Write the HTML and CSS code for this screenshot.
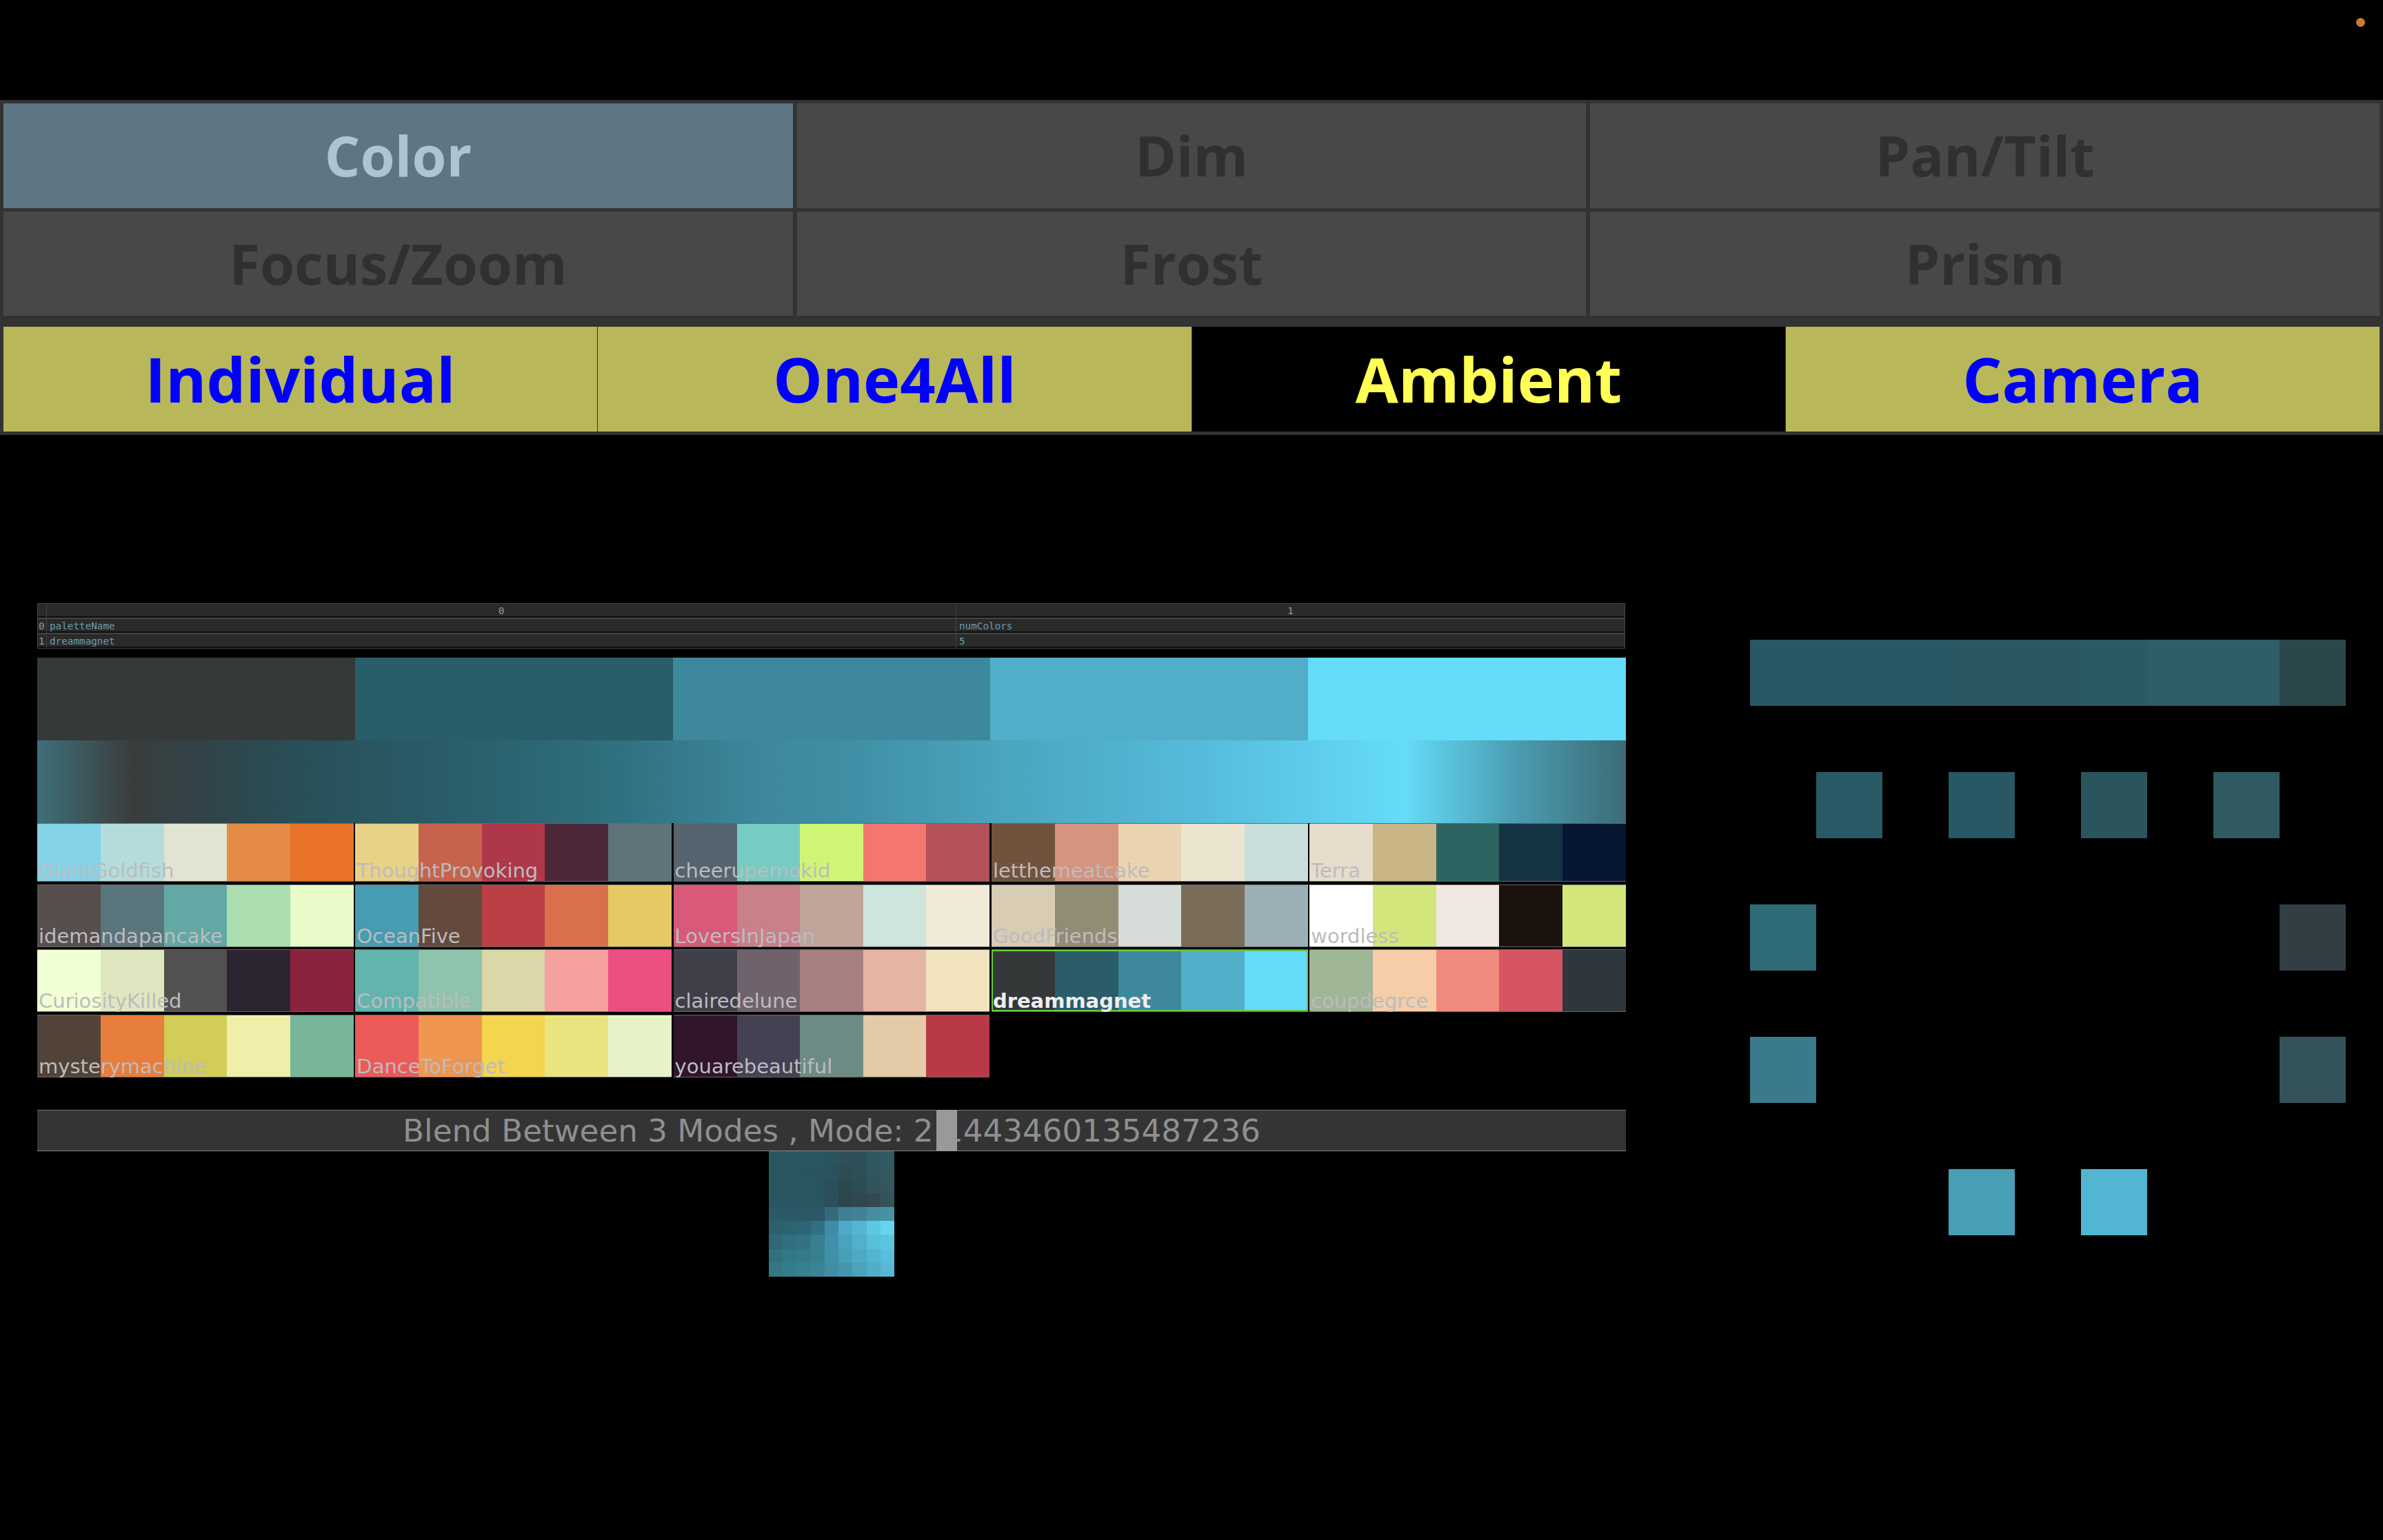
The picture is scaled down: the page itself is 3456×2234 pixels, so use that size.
FILE: index.html
```html
<!DOCTYPE html>
<html lang="en">
<head>
  <meta charset="UTF-8" />
  <title>Ambient Color</title>
  <link rel="stylesheet" href="styles.css">
</head>
<body>
  <span class="status-dot"></span>

  <header class="controls">
    <nav class="groups">
      <button class="group active">Color</button>
      <button class="group">Dim</button>
      <button class="group">Pan/Tilt</button>
      <button class="group">Focus/Zoom</button>
      <button class="group">Frost</button>
      <button class="group">Prism</button>
    </nav>
    <nav class="modes">
      <button class="mode">Individual</button>
      <button class="mode">One4All</button>
      <button class="mode active">Ambient</button>
      <button class="mode">Camera</button>
    </nav>
  </header>

  <main class="content">
    <section class="left">
      <div class="datatable">
        <div class="cell head"></div>
        <div class="cell head">0</div>
        <div class="cell head">1</div>
        <div class="cell index">0</div>
        <div class="cell">paletteName</div>
        <div class="cell">numColors</div>
        <div class="cell index">1</div>
        <div class="cell">dreammagnet</div>
        <div class="cell">5</div>
      </div>

      <div class="current">
        <div class="cur cur1"></div>
        <div class="cur cur2"></div>
        <div class="cur cur3"></div>
        <div class="cur cur4"></div>
        <div class="cur cur5"></div>
      </div>
      <div class="ramp"></div>

      <div class="palettes">
        <div class="tile giantgoldfish"><span>GiantGoldfish</span></div>
        <div class="tile thoughtprovoking"><span>ThoughtProvoking</span></div>
        <div class="tile cheerupemokid"><span>cheerupemokid</span></div>
        <div class="tile letthemeatcake"><span>letthemeatcake</span></div>
        <div class="tile terra"><span>Terra</span></div>
        <div class="tile idemandapancake"><span>idemandapancake</span></div>
        <div class="tile oceanfive"><span>OceanFive</span></div>
        <div class="tile loversinjapan"><span>LoversInJapan</span></div>
        <div class="tile goodfriends"><span>GoodFriends</span></div>
        <div class="tile wordless"><span>wordless</span></div>
        <div class="tile curiositykilled"><span>CuriosityKilled</span></div>
        <div class="tile compatible"><span>Compatible</span></div>
        <div class="tile clairedelune"><span>clairedelune</span></div>
        <div class="tile dreammagnet selected"><span>dreammagnet</span></div>
        <div class="tile coupdegrce"><span>coupdegrce</span></div>
        <div class="tile mysterymachine"><span>mysterymachine</span></div>
        <div class="tile dancetoforget"><span>DanceToForget</span></div>
        <div class="tile youarebeautiful"><span>youarebeautiful</span></div>
      </div>

      <div class="blend">
        Blend Between 3 Modes , Mode: 2.1443460135487236
        <span class="thumb"></span>
      </div>

      <svg class="preview" viewBox="0 0 9 9" shape-rendering="crispEdges">
        <rect x="0" y="0" width="1" height="1" fill="#2a5660"/><rect x="1" y="0" width="1" height="1" fill="#2a5660"/><rect x="2" y="0" width="1" height="1" fill="#2a5660"/><rect x="3" y="0" width="1" height="1" fill="#2a5660"/><rect x="4" y="0" width="1" height="1" fill="#2a545e"/><rect x="5" y="0" width="1" height="1" fill="#2d5058"/><rect x="6" y="0" width="1" height="1" fill="#2d5058"/><rect x="7" y="0" width="1" height="1" fill="#305860"/><rect x="8" y="0" width="1" height="1" fill="#315a64"/>
        <rect x="0" y="1" width="1" height="1" fill="#2a5660"/><rect x="1" y="1" width="1" height="1" fill="#2a5660"/><rect x="2" y="1" width="1" height="1" fill="#2a5560"/><rect x="3" y="1" width="1" height="1" fill="#2a5560"/><rect x="4" y="1" width="1" height="1" fill="#2a525c"/><rect x="5" y="1" width="1" height="1" fill="#2d4c54"/><rect x="6" y="1" width="1" height="1" fill="#2d4f57"/><rect x="7" y="1" width="1" height="1" fill="#31565f"/><rect x="8" y="1" width="1" height="1" fill="#33585f"/>
        <rect x="0" y="2" width="1" height="1" fill="#295660"/><rect x="1" y="2" width="1" height="1" fill="#295660"/><rect x="2" y="2" width="1" height="1" fill="#295660"/><rect x="3" y="2" width="1" height="1" fill="#275560"/><rect x="4" y="2" width="1" height="1" fill="#29505a"/><rect x="5" y="2" width="1" height="1" fill="#2d4950"/><rect x="6" y="2" width="1" height="1" fill="#2e4c53"/><rect x="7" y="2" width="1" height="1" fill="#325359"/><rect x="8" y="2" width="1" height="1" fill="#34565d"/>
        <rect x="0" y="3" width="1" height="1" fill="#295660"/><rect x="1" y="3" width="1" height="1" fill="#295660"/><rect x="2" y="3" width="1" height="1" fill="#295660"/><rect x="3" y="3" width="1" height="1" fill="#275560"/><rect x="4" y="3" width="1" height="1" fill="#29505a"/><rect x="5" y="3" width="1" height="1" fill="#2e454c"/><rect x="6" y="3" width="1" height="1" fill="#2f484e"/><rect x="7" y="3" width="1" height="1" fill="#34494f"/><rect x="8" y="3" width="1" height="1" fill="#345358"/>
        <rect x="0" y="4" width="1" height="1" fill="#2a5a67"/><rect x="1" y="4" width="1" height="1" fill="#2a5a67"/><rect x="2" y="4" width="1" height="1" fill="#2b5a66"/><rect x="3" y="4" width="1" height="1" fill="#2a5865"/><rect x="4" y="4" width="1" height="1" fill="#336b7a"/><rect x="5" y="4" width="1" height="1" fill="#3f8093"/><rect x="6" y="4" width="1" height="1" fill="#408296"/><rect x="7" y="4" width="1" height="1" fill="#458ea0"/><rect x="8" y="4" width="1" height="1" fill="#4890a4"/>
        <rect x="0" y="5" width="1" height="1" fill="#2c606c"/><rect x="1" y="5" width="1" height="1" fill="#2c6570"/><rect x="2" y="5" width="1" height="1" fill="#2d6673"/><rect x="3" y="5" width="1" height="1" fill="#2f7084"/><rect x="4" y="5" width="1" height="1" fill="#408ca6"/><rect x="5" y="5" width="1" height="1" fill="#4eaac6"/><rect x="6" y="5" width="1" height="1" fill="#53b6d4"/><rect x="7" y="5" width="1" height="1" fill="#5bc9e4"/><rect x="8" y="5" width="1" height="1" fill="#63d5f0"/>
        <rect x="0" y="6" width="1" height="1" fill="#2f6875"/><rect x="1" y="6" width="1" height="1" fill="#307080"/><rect x="2" y="6" width="1" height="1" fill="#317383"/><rect x="3" y="6" width="1" height="1" fill="#387f90"/><rect x="4" y="6" width="1" height="1" fill="#4190a8"/><rect x="5" y="6" width="1" height="1" fill="#4ba3bb"/><rect x="6" y="6" width="1" height="1" fill="#52b0ca"/><rect x="7" y="6" width="1" height="1" fill="#58bfd6"/><rect x="8" y="6" width="1" height="1" fill="#5bc5e0"/>
        <rect x="0" y="7" width="1" height="1" fill="#31707f"/><rect x="1" y="7" width="1" height="1" fill="#337885"/><rect x="2" y="7" width="1" height="1" fill="#347a8b"/><rect x="3" y="7" width="1" height="1" fill="#378090"/><rect x="4" y="7" width="1" height="1" fill="#4090a8"/><rect x="5" y="7" width="1" height="1" fill="#47a0b5"/><rect x="6" y="7" width="1" height="1" fill="#4eaac2"/><rect x="7" y="7" width="1" height="1" fill="#54b5ce"/><rect x="8" y="7" width="1" height="1" fill="#58bedb"/>
        <rect x="0" y="8" width="1" height="1" fill="#347785"/><rect x="1" y="8" width="1" height="1" fill="#357d8d"/><rect x="2" y="8" width="1" height="1" fill="#387f90"/><rect x="3" y="8" width="1" height="1" fill="#3a8595"/><rect x="4" y="8" width="1" height="1" fill="#418ea4"/><rect x="5" y="8" width="1" height="1" fill="#4496ad"/><rect x="6" y="8" width="1" height="1" fill="#4ba3bb"/><rect x="7" y="8" width="1" height="1" fill="#52adc8"/><rect x="8" y="8" width="1" height="1" fill="#58b8d4"/>
      </svg>
    </section>

    <section class="fixtures">
      <div class="px r1 c1 p-a"></div><div class="px r1 c2 p-a"></div><div class="px r1 c3 p-a"></div><div class="px r1 c4 p-b"></div><div class="px r1 c5 p-b"></div><div class="px r1 c6 p-c"></div><div class="px r1 c7 p-d"></div><div class="px r1 c8 p-d"></div><div class="px r1 c9 p-e"></div>
      <div class="px r3 c2 p-f"></div><div class="px r3 c4 p-g"></div><div class="px r3 c6 p-h"></div><div class="px r3 c8 p-i"></div>
      <div class="px r5 c1 p-j"></div><div class="px r5 c9 p-k"></div>
      <div class="px r7 c1 p-l"></div><div class="px r7 c9 p-m"></div>
      <div class="px r9 c4 p-n"></div><div class="px r9 c6 p-o"></div>
    </section>
  </main>
</body>
</html>
```

FILE: styles.css
```css
html, body {
  margin: 0;
  padding: 0;
  background-color: #000;
}
body {
  width: 3456px;
  height: 2234px;
  overflow: hidden;
  position: relative;
  padding-top: 145px;
  box-sizing: border-box;
}
button {
  border: none;
  margin: 0;
  padding: 0 0 3px;
  font-family: "Open Sans", sans-serif;
  font-weight: 700;
}

.status-dot {
  position: absolute;
  top: 26px;
  left: 3417px;
  width: 13px;
  height: 13px;
  border-radius: 50%;
  background-color: #c47e2f;
}

/* top buttons */
.controls {
  background-color: #333;
  padding: 5px;
}
.groups {
  display: grid;
  grid-template-columns: 1145px 1144px 1145px;
  grid-template-rows: 152px 151px;
  gap: 5px 6px;
}
.group {
  background-color: #484848;
  color: #303030;
  font-size: 81px;
}
.group.active {
  background-color: #5e7684;
  color: #abc6d2;
}
.modes {
  display: grid;
  grid-template-columns: 861px 861px 860px 861px;
  gap: 1px;
  height: 152px;
  margin-top: 16px;
}
.mode {
  background-color: #b8b85a;
  color: #00f;
  font-size: 90px;
}
.mode.active {
  background-color: #000;
  color: #ff5;
}

/* main area */
.content {
  display: flex;
  align-items: flex-start;
  margin-top: 244px;
  padding-left: 54px;
}
.left {
  width: 2304px;
  flex: none;
}

.datatable {
  display: grid;
  grid-template-columns: 12px 1318px 1fr;
  grid-auto-rows: 20px;
  gap: 2px 1px;
  width: 2303px;
  box-sizing: border-box;
  padding: 1px;
  background-color: #444;
  font-family: "DejaVu Sans Mono", monospace;
  font-size: 14.3px;
  line-height: 20px;
}
.cell {
  background-color: #2a2a2a;
  border-bottom: 2px solid #0e0e0e;
  color: #6b9cb0;
  padding-left: 4px;
  overflow: hidden;
}
.cell.head {
  color: #999;
  text-align: center;
  padding-left: 0;
}
.cell.index {
  color: #999;
  padding-left: 1px;
}

.current {
  display: flex;
  height: 120px;
  margin-top: 13px;
}
.cur {
  flex: 1;
}
.cur1 { background-color: #353939; }
.cur2 { background-color: #295d69; }
.cur3 { background-color: #3e889e; }
.cur4 { background-color: #52aec8; }
.cur5 { background-color: #65dcf9; }

.ramp {
  height: 120px;
  background: linear-gradient(90deg, #3e6f7a 0, #3a3d3d 6%, #30444a 11%, #285059 17%, #295d69 26%, #2f6f7e 36%, #3e889e 46%, #3f8fa5 51%, #4aa5bd 60.7%, #56bcdc 73.6%, #65dcf9 86%, #4b9db2 93%, #3c6b76 100%);
}

.palettes {
  display: grid;
  grid-template-columns: repeat(5, 1fr);
  grid-template-rows: 85px repeat(3, 91px);
  gap: 3.67px 2.5px;
}
.tile {
  display: flex;
  align-items: flex-end;
  box-sizing: border-box;
  border-top: 1px solid #666;
  border-bottom: 1px solid #666;
  padding-left: 2px;
  font-family: "DejaVu Sans", sans-serif;
  font-size: 29px;
  color: #bcbcbf;
  white-space: nowrap;
}
.tile span {
  margin-bottom: -2px;
}
.tile.selected {
  box-shadow: inset 0 0 0 2px #66cc44;
  font-weight: 700;
  color: #eee;
}

.giantgoldfish { background: linear-gradient(90deg, #84d3e8 0 20%, #b5dcdc 20% 40%, #e1e4d0 40% 60%, #e48c47 60% 80%, #e97329 80%); }
.thoughtprovoking { background: linear-gradient(90deg, #e7d286 0 20%, #c7634d 20% 40%, #ae3849 40% 60%, #4c2737 60% 80%, #5e7478 80%); }
.cheerupemokid { background: linear-gradient(90deg, #566470 0 20%, #75ccc2 20% 40%, #cff574 40% 60%, #f3766f 60% 80%, #b3525a 80%); }
.letthemeatcake { background: linear-gradient(90deg, #71533d 0 20%, #d5947e 20% 40%, #ebd3b1 40% 60%, #ebe5cf 60% 80%, #c9dedb 80%); }
.terra { background: linear-gradient(90deg, #e6dccb 0 20%, #c8b484 20% 40%, #2d6462 40% 60%, #163344 60% 80%, #071631 80%); }
.idemandapancake { background: linear-gradient(90deg, #574e4e 0 20%, #5a757b 20% 40%, #63a8a5 40% 60%, #abdfb0 60% 80%, #e9fbc9 80%); }
.oceanfive { background: linear-gradient(90deg, #469cb1 0 20%, #644a3e 20% 40%, #bb3f45 40% 60%, #da6f4c 60% 80%, #e6c963 80%); }
.loversinjapan { background: linear-gradient(90deg, #d95a78 0 20%, #c98089 20% 40%, #bfa49a 40% 60%, #cde5dc 60% 80%, #f2ead8 80%); }
.goodfriends { background: linear-gradient(90deg, #d8ccb5 0 20%, #938c74 20% 40%, #d6dcd7 40% 60%, #796d57 60% 80%, #9cafb6 80%); }
.wordless { background: linear-gradient(90deg, #fff 0 20%, #d2e67c 20% 40%, #f0e8e3 40% 60%, #1c120d 60% 80%, #d2e67c 80%); }
.curiositykilled { background: linear-gradient(90deg, #f1ffd4 0 20%, #dfe7c0 20% 40%, #545151 40% 60%, #2c2431 60% 80%, #8a243e 80%); }
.compatible { background: linear-gradient(90deg, #63b4ad 0 20%, #8fc4ac 20% 40%, #dcd7a9 40% 60%, #f3a09e 60% 80%, #ec4e80 80%); }
.clairedelune { background: linear-gradient(90deg, #403f49 0 20%, #70626c 20% 40%, #a88081 40% 60%, #e6b4a2 60% 80%, #f3e4c0 80%); }
.dreammagnet { background: linear-gradient(90deg, #343838 0 20%, #2a5d69 20% 40%, #3e889e 40% 60%, #52aec8 60% 80%, #65dcf9 80%); }
.coupdegrce { background: linear-gradient(90deg, #9fb697 0 20%, #f6cca9 20% 40%, #f18a7e 40% 60%, #d55662 60% 80%, #2e373c 80%); }
.mysterymachine { background: linear-gradient(90deg, #524338 0 20%, #e77e3c 20% 40%, #d1cd57 40% 60%, #f0eea9 60% 80%, #78b599 80%); }
.dancetoforget { background: linear-gradient(90deg, #ec5a57 0 20%, #ee9650 20% 40%, #f3d54f 40% 60%, #eae47f 60% 80%, #e6f3c8 80%); }
.youarebeautiful { background: linear-gradient(90deg, #31152d 0 20%, #444155 20% 40%, #6d8b84 40% 60%, #e3cba8 60% 80%, #b93a47 80%); }

.blend {
  position: relative;
  box-sizing: border-box;
  height: 60px;
  margin-top: 47px;
  background-color: #343434;
  border-top: 1px solid #777;
  border-bottom: 1px solid #888;
  color: #8f8f8f;
  font-family: "DejaVu Sans", sans-serif;
  font-size: 45.2px;
  line-height: 60px;
  text-align: center;
}
.thumb {
  position: absolute;
  top: -1px;
  bottom: -1px;
  left: 1304px;
  width: 30px;
  background-color: #999;
}

.preview {
  display: block;
  width: 182px;
  height: 182px;
  margin: 0 auto;
}

/* fixture squares, placed on a 9x9 board */
.fixtures {
  display: grid;
  grid-template-columns: repeat(9, 96px);
  grid-template-rows: repeat(9, 96px);
  flex: none;
  margin: 53px 0 0 180px;
}
.r1 { grid-row: 1; }
.r3 { grid-row: 3; }
.r5 { grid-row: 5; }
.r7 { grid-row: 7; }
.r9 { grid-row: 9; }
.c1 { grid-column: 1; }
.c2 { grid-column: 2; }
.c3 { grid-column: 3; }
.c4 { grid-column: 4; }
.c5 { grid-column: 5; }
.c6 { grid-column: 6; }
.c7 { grid-column: 7; }
.c8 { grid-column: 8; }
.c9 { grid-column: 9; }
.p-a { background-color: #285865; }
.p-b { background-color: #2a5860; }
.p-c { background-color: #2a5a63; }
.p-d { background-color: #2e5e67; }
.p-e { background-color: #2c474c; }
.p-f { background-color: #285a66; }
.p-g { background-color: #285864; }
.p-h { background-color: #2b555d; }
.p-i { background-color: #305a62; }
.p-j { background-color: #2f6a77; }
.p-k { background-color: #313f45; }
.p-l { background-color: #3a7a8b; }
.p-m { background-color: #34525a; }
.p-n { background-color: #489fb5; }
.p-o { background-color: #52b5d1; }
```
